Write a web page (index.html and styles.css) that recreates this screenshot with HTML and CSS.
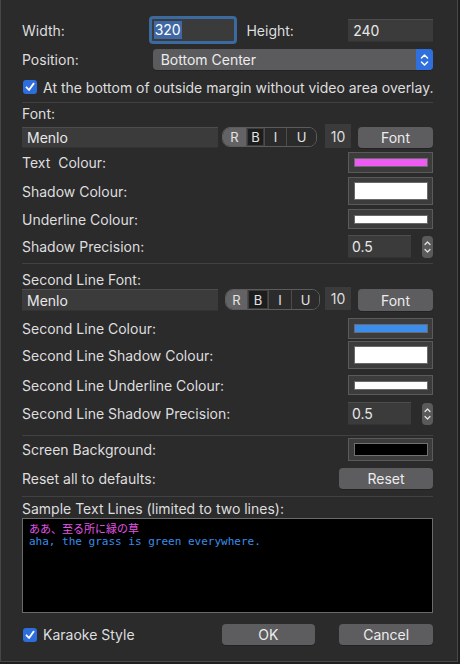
FILE: index.html
```html
<!DOCTYPE html>
<html>
<head>
<meta charset="utf-8">
<link rel="stylesheet" href="styles.css">
</head>
<body>
<div class="win">
  <div class="row r-size">
    <span class="lbl">Width:</span>
    <div class="focus"><div class="field wfield"><span class="sel">320</span></div></div>
    <span class="lbl hlbl">Height:</span>
    <div class="field hfield">240</div>
  </div>
  <div class="row r-pos">
    <span class="lbl">Position:</span>
    <div class="popup">
      <span class="popup-txt">Bottom Center</span>
      <span class="popup-arrows">
        <svg width="9" height="14" viewBox="0 0 9 14"><path d="M1.5 5 L4.5 2 L7.5 5 M1.5 9 L4.5 12 L7.5 9" fill="none" stroke="#fff" stroke-width="1.5" stroke-linecap="round" stroke-linejoin="round"/></svg>
      </span>
    </div>
  </div>
  <div class="row r-check">
    <span class="cb"><svg width="10" height="10" viewBox="0 0 10 10"><path d="M1.5 5.3 L4 8 L8.6 1.6" fill="none" stroke="#fff" stroke-width="1.8" stroke-linecap="round" stroke-linejoin="round"/></svg></span>
    <span class="lbl">At the bottom of outside margin without video area overlay.</span>
  </div>
  <div class="sep s1"></div>
  <div class="row r-head">Font:</div>
  <div class="row r-font">
    <div class="field ffield">Menlo</div>
    <div class="seg seg1">
      <span class="sg sg-r on">R</span><span class="sg sg-b dark">B</span><span class="sg sg-i">I</span><span class="sg sg-u">U</span>
    </div>
    <div class="size">10</div>
    <div class="btn fbtn">Font</div>
  </div>
  <div class="row r-c1 crow"><span class="lbl">Text&nbsp; Colour:</span><div class="well w21"><span class="sw mag"></span></div></div>
  <div class="row r-c2 crow"><span class="lbl">Shadow Colour:</span><div class="well w28"><span class="sw white"></span></div></div>
  <div class="row r-c3 crow"><span class="lbl">Underline Colour:</span><div class="well w20"><span class="sw white"></span></div></div>
  <div class="row r-c4 crow"><span class="lbl">Shadow Precision:</span>
    <div class="prec"><div class="field pfield">0.5</div>
      <span class="stepper"><svg width="11" height="22" viewBox="0 0 11 22"><path d="M3 8.5 L5.5 6 L8 8.5 M3 13.5 L5.5 16 L8 13.5" fill="none" stroke="#e6e6e6" stroke-width="1.2" stroke-linecap="round" stroke-linejoin="round"/></svg></span>
    </div>
  </div>
  <div class="sep s2"></div>
  <div class="row r-head2">Second Line Font:</div>
  <div class="row r-font2">
    <div class="field ffield">Menlo</div>
    <div class="seg seg2">
      <span class="sg sg-r on">R</span><span class="sg sg-b dark">B</span><span class="sg sg-i">I</span><span class="sg sg-u">U</span>
    </div>
    <div class="size">10</div>
    <div class="btn fbtn">Font</div>
  </div>
  <div class="row r-d1 crow"><span class="lbl">Second Line Colour:</span><div class="well w21"><span class="sw blue"></span></div></div>
  <div class="row r-d2 crow"><span class="lbl">Second Line Shadow Colour:</span><div class="well w28"><span class="sw white"></span></div></div>
  <div class="row r-d3 crow"><span class="lbl">Second Line Underline Colour:</span><div class="well w20"><span class="sw white"></span></div></div>
  <div class="row r-d4 crow"><span class="lbl">Second Line Shadow Precision:</span>
    <div class="prec"><div class="field pfield">0.5</div>
      <span class="stepper"><svg width="11" height="22" viewBox="0 0 11 22"><path d="M3 8.5 L5.5 6 L8 8.5 M3 13.5 L5.5 16 L8 13.5" fill="none" stroke="#e6e6e6" stroke-width="1.2" stroke-linecap="round" stroke-linejoin="round"/></svg></span>
    </div>
  </div>
  <div class="sep s3"></div>
  <div class="row r-bg crow"><span class="lbl">Screen Background:</span><div class="well w23"><span class="sw black"></span></div></div>
  <div class="row r-reset crow"><span class="lbl">Reset all to defaults:</span><div class="btn rbtn">Reset</div></div>
  <div class="sep s4"></div>
  <div class="row r-sample">Sample Text Lines (limited to two lines):</div>
  <div class="sample">
    <div class="l1">ああ、至る所に緑の草</div>
    <div class="l2">aha, the grass is green everywhere.</div>
  </div>
  <div class="row r-bottom">
    <span class="cb"><svg width="10" height="10" viewBox="0 0 10 10"><path d="M1.5 5.3 L4 8 L8.6 1.6" fill="none" stroke="#fff" stroke-width="1.8" stroke-linecap="round" stroke-linejoin="round"/></svg></span>
    <span class="lbl kar">Karaoke Style</span>
    <div class="btn okbtn">OK</div>
    <div class="btn cbtn">Cancel</div>
  </div>
</div>
</body>
</html>
```
FILE: styles.css
```css
html, body { margin: 0; padding: 0; background: #1f1f1f; }
body {
  font-family: Inter, "Liberation Sans", "Noto Sans CJK JP", sans-serif;
  font-size: 14px;
  color: #dedede;
}
.win {
  box-sizing: border-box;
  width: 458px;
  height: 662px;
  background: #2b2b2c;
  border: 1px solid #474747;
  border-top: none;
  padding: 16px 24px 0 21px;
  display: flex;
  flex-direction: column;
}
.row { display: flex; align-items: center; flex: none; }
.lbl { white-space: nowrap; }
.field {
  box-sizing: border-box;
  background: #3b3b3c;
  border-top: 1px solid #4d4d4d;
  border-bottom: 1px solid #333;
  color: #e8e8e8;
  display: flex;
  align-items: center;
}
/* row 1 */
.r-size { height: 28px; }
.r-size .lbl:first-child { width: 127px; }
.focus {
  box-sizing: border-box;
  width: 89px; height: 28px;
  border: 3px solid #3a6a9f;
  border-radius: 4px;
  background: #3b3b3c;
  padding: 1px;
}
.wfield { width: 100%; height: 100%; border: none; padding-left: 1px; }
.sel { background: #3e68a6; color: #fff; padding: 0 1px; line-height: 18px; }
.hlbl { margin-left: 9px; width: 102px; }
.hfield { width: 85px; height: 23px; padding-left: 5px; }
/* position */
.r-pos { height: 21px; margin-top: 5px; }
.r-pos .lbl { width: 131px; }
.popup {
  width: 281px; height: 21px;
  background: #5b5b5d;
  border-radius: 4px;
  display: flex; align-items: center;
  box-shadow: 0 1px 0 #222;
}
.popup-txt { flex: 1; padding-left: 8px; color: #ececec; }
.popup-arrows {
  width: 17px; height: 21px;
  background: #2f6fde;
  border-radius: 0 4px 4px 0;
  display: flex; align-items: center; justify-content: center;
}
/* checkbox */
.r-check { height: 16px; margin-top: 9px; }
.cb {
  box-sizing: border-box;
  width: 14px; height: 14px;
  border-radius: 3px;
  background: #2d6edc;
  display: flex; align-items: center; justify-content: center;
  margin: 0 6px 0 1px;
  flex: none;
}
.sep { height: 1px; background: #414142; flex: none; }
.s1 { margin-top: 7px; }
.r-head { height: 14px; margin-top: 3px; }
/* font rows */
.r-font { height: 24px; margin-top: 4px; align-items: flex-start; }
.r-font2 { height: 24px; margin-top: 1px; align-items: flex-start; }
.ffield { width: 196px; height: 21px; padding-left: 5px; margin-top: 3px; }
.r-font2 .ffield { margin-top: 2px; height: 22px; }
.seg {
  box-sizing: border-box;
  height: 20px;
  border: 1px solid #5c5c5c;
  border-radius: 8px;
  display: flex;
  overflow: hidden;
  margin-top: 3px;
}
.seg1 { margin-left: 4px; width: 95px; }
.seg2 { margin-left: 7px; width: 95px; margin-top: 2px; height: 21px; }
.sg {
  display: flex; align-items: center; justify-content: center;
  color: #e4e4e4; font-size: 13px;
  border-left: 1px solid #4c4c4c;
  background: #2b2b2c;
}
.seg1 .sg-r { width: 23px; }
.seg1 .sg-b { width: 17px; }
.seg1 .sg-i { width: 21px; }
.seg2 .sg-r { width: 21px; }
.seg2 .sg-b { width: 20px; }
.seg2 .sg-i { width: 22px; }
.sg-r { border-left: none; }
.sg-u { flex: 1; }
.on { background: #636365; }
.dark { background: #1d1d1e; box-shadow: inset 0 0 0 1px #3c3c3c; }
.size {
  box-sizing: border-box;
  width: 26px; height: 24px;
  background: #3b3b3c;
  display: flex; align-items: center; justify-content: center;
}
.seg1 + .size { margin-left: 8px; }
.seg2 + .size { margin-left: 5px; height: 23px; }
.btn {
  box-sizing: border-box;
  height: 21px;
  background: #5d5d5f;
  border-radius: 4px;
  display: flex; align-items: center; justify-content: center;
  color: #ececec;
  box-shadow: 0 1px 0 #222;
}
.fbtn { width: 75px; margin-left: auto; margin-top: 3px; }
.r-font2 .fbtn { margin-top: 2px; height: 22px; }
/* colour rows */
.crow { justify-content: space-between; }
.well {
  box-sizing: border-box;
  width: 85px;
  background: #3c3c3d;
  border: 1px solid #5a5a5a;
  padding: 4px 4px 4px 5px;
  display: flex;
}
.w21 { height: 21px; padding-top: 5px; padding-bottom: 5px; }
.w28 { height: 28px; }
.w20 { height: 20px; padding-top: 5px; padding-bottom: 4px; }
.w23 { height: 23px; }
.sw { flex: 1; border: 1px solid #6a6a6a; }
.mag { background: #ec5cf2; }
.blue { background: #3c8eee; }
.white { background: #fff; }
.black { background: #000; border-color: #707070; }
.r-c1 { height: 21px; margin-top: 4px; }
.r-c2 { height: 28px; margin-top: 4px; }
.r-c3 { height: 20px; margin-top: 4px; }
.r-c4 { height: 23px; margin-top: 6px; }
.prec { display: flex; align-items: center; width: 85px; justify-content: space-between; }
.pfield { width: 63px; height: 23px; padding-left: 4px; }
.stepper {
  width: 11px; height: 22px;
  background: #5a5a5b;
  border-radius: 4px;
  display: flex;
}
.s2 { margin-top: 5px; }
.r-head2 { height: 14px; margin-top: 8px; }
.r-d1 { height: 21px; margin-top: 7px; }
.r-d2 { height: 28px; margin-top: 2px; }
.r-d3 { height: 20px; margin-top: 6px; }
.r-d4 { height: 23px; margin-top: 7px; }
.s3 { margin-top: 10px; }
.r-bg { height: 23px; margin-top: 2px; }
.r-reset { height: 21px; margin-top: 7px; }
.rbtn { width: 94px; }
.s4 { margin-top: 7px; }
.r-sample { height: 14px; margin-top: 4px; }
.sample {
  box-sizing: border-box;
  height: 95px;
  margin-top: 3px;
  background: #000;
  border: 1px solid #6a6a6a;
  padding: 3px 0 0 6px;
  font-family: "DejaVu Sans Mono", "Noto Sans CJK JP", monospace;
  font-size: 11px;
  line-height: 13px;
  flex: none;
}
.l1 { color: #e455e8; font-family: "Noto Sans CJK JP", monospace; }
.l2 { color: #3a8de8; }
.r-bottom { height: 21px; margin-top: 11px; }
.kar { width: 179px; }
.okbtn { width: 94px; }
.cbtn { width: 94px; margin-left: 24px; }
```
